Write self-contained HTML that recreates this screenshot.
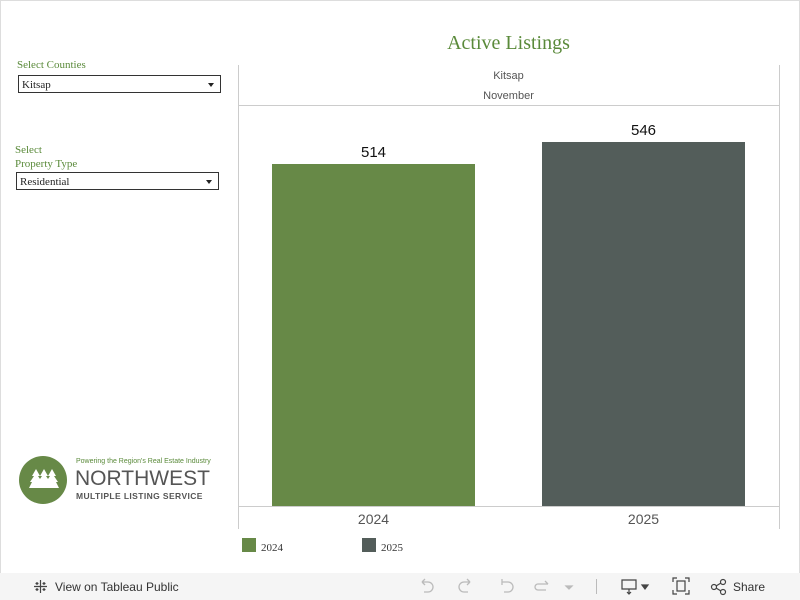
<!DOCTYPE html>
<html><head><style>
body{margin:0;width:800px;height:600px;position:relative;background:#fff;font-family:"Liberation Sans",sans-serif;overflow:hidden}
.a{position:absolute}
.serif{font-family:"Liberation Serif",serif}
.dd{position:absolute;border:1px solid #333;height:18px;font-family:"Liberation Serif",serif;font-size:11px;line-height:18px;padding-left:3px;box-sizing:border-box;color:#222}
.dd:after{content:"";position:absolute;right:6px;top:7px;border-left:3.5px solid transparent;border-right:3.5px solid transparent;border-top:4px solid #222}
</style></head><body>
<div class="a" style="left:0;top:0;width:798px;height:572px;border:1px solid #ddd"></div>
<div class="a serif" style="left:238px;width:541px;top:32px;text-align:center;font-size:20px;color:#5a8a3a">Active Listings</div>
<div class="a serif" style="left:17px;top:59px;font-size:11px;color:#5a8a3a">Select Counties</div>
<div class="dd" style="left:18px;top:75px;width:203px">Kitsap</div>
<div class="a serif" style="left:15px;top:143px;font-size:11px;line-height:14px;color:#5a8a3a">Select<br>Property Type</div>
<div class="dd" style="left:16px;top:172px;width:203px">Residential</div>
<div class="a" style="left:238px;top:65px;width:1px;height:464px;background:#ccc"></div>
<div class="a" style="left:779px;top:65px;width:1px;height:464px;background:#ccc"></div>
<div class="a" style="left:238px;top:105px;width:542px;height:1px;background:#ccc"></div>
<div class="a" style="left:238px;top:506px;width:542px;height:1px;background:#ccc"></div>
<div class="a" style="left:238px;width:541px;top:66px;text-align:center;font-size:11px;color:#555;line-height:20px">Kitsap<br>November</div>
<div class="a" style="left:272px;top:164px;width:203px;height:342px;background:#678947"></div>
<div class="a" style="left:542px;top:142px;width:203px;height:364px;background:#535d5a"></div>
<div class="a" style="left:272px;width:203px;top:144px;text-align:center;font-size:15px;color:#111">514</div>
<div class="a" style="left:542px;width:203px;top:122px;text-align:center;font-size:15px;color:#111">546</div>
<div class="a" style="left:272px;width:203px;top:511px;text-align:center;font-size:14px;color:#555">2024</div>
<div class="a" style="left:542px;width:203px;top:511px;text-align:center;font-size:14px;color:#555">2025</div>
<div class="a" style="left:242px;top:538px;width:14px;height:14px;background:#678947"></div>
<div class="a serif" style="left:261px;top:542px;font-size:11px;color:#333">2024</div>
<div class="a" style="left:362px;top:538px;width:14px;height:14px;background:#535d5a"></div>
<div class="a serif" style="left:381px;top:542px;font-size:11px;color:#333">2025</div>
<div class="a" style="left:19px;top:456px;width:48px;height:48px;border-radius:50%;background:#678947"></div>
<svg class="a" style="left:19px;top:456px" width="48" height="48"><g fill="#fff"><path d="M10 32 l3 -6 h-2 l4 -6 h-2 l4 -7 l4 7 h-2 l4 6 h-2 l3 6z"/><path d="M18 32 l3 -6 h-2 l4 -6 h-2 l4 -7 l4 7 h-2 l4 6 h-2 l3 6z"/><path d="M26 32 l3 -6 h-2 l4 -6 h-2 l4 -7 l4 7 h-2 l4 6 h-2 l3 6z"/></g></svg>
<div class="a" style="left:76px;top:458px;font-size:7px;color:#5a8a3a">Powering the Region's Real Estate Industry</div>
<div class="a" style="left:75px;top:467px;font-size:21px;color:#555;line-height:24px">NORTHWEST</div>
<div class="a" style="left:76px;top:491px;font-size:8.5px;font-weight:bold;color:#555;letter-spacing:0.4px">MULTIPLE LISTING SERVICE</div>
<div class="a" style="left:0;top:573px;width:800px;height:27px;background:#f5f5f5"></div>
<svg class="a" style="left:33px;top:579px" width="15" height="15"><g stroke="#444" stroke-width="1.2"><path d="M7.5 1v13M1 7.5h13M4 3v3M2.5 4.5h3M11 3v3M9.5 4.5h3M4 9v3M2.5 10.5h3M11 9v3M9.5 10.5h3"/></g></svg>
<div class="a" style="left:55px;top:580px;font-size:12px;color:#333">View on Tableau Public</div>
<svg class="a" style="left:418px;top:578px" width="160" height="18" fill="none" stroke="#bbb" stroke-width="1.3"><path d="M4 4h6a5 5 0 010 10H6M4 4l3-3M4 4l3 3"/><path d="M52 4h-6a5 5 0 000 10h4M52 4l-3-3M52 4l-3 3"/><path d="M84 4h6a5 5 0 010 10H86M84 1v6"/><path d="M130 6h-10a3 3 0 000 6h8M130 6l-3-3"/><path d="M148 8l3 3 3-3z" fill="#bbb"/></svg>
<div class="a" style="left:596px;top:579px;width:1px;height:15px;background:#bbb"></div>
<svg class="a" style="left:620px;top:578px" width="34" height="18" fill="none" stroke="#444" stroke-width="1.2"><path d="M2 2h14v9H2zM9 11v5M7 14l2 2 2-2"/><path d="M22 7l3 4 3-4z" fill="#444"/></svg>
<svg class="a" style="left:672px;top:577px" width="18" height="18" fill="none" stroke="#444" stroke-width="1.2"><path d="M1 5V1h4M13 1h4v4M17 13v4h-4M5 17H1v-4"/><rect x="5" y="4" width="8" height="10"/></svg>
<svg class="a" style="left:710px;top:578px" width="18" height="18" fill="none" stroke="#444" stroke-width="1.2"><circle cx="4" cy="9" r="2.5"/><circle cx="13" cy="4" r="2.5"/><circle cx="13" cy="14" r="2.5"/><path d="M6 8l5-3M6 10l5 3"/></svg>
<div class="a" style="left:733px;top:580px;font-size:12px;color:#333">Share</div>
</body></html>
